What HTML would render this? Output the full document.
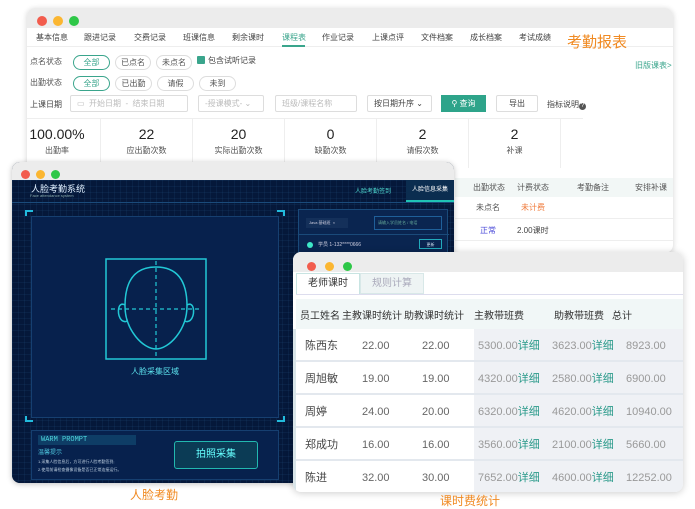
<!DOCTYPE html>
<html><head><meta charset="utf-8"><style>
*{margin:0;padding:0;box-sizing:border-box}
body{width:695px;height:508px;background:#fff;position:relative;overflow:hidden;font-family:"Liberation Sans","Noto Sans CJK SC",sans-serif;color:#333}
.a{position:absolute;white-space:nowrap}
.dots span{display:inline-block;width:10px;height:10px;border-radius:50%;margin-right:6px}
.r{background:#f25c4d}.y{background:#fbb631}.g{background:#2ec748}
.pill{position:absolute;height:15px;border:1px solid #ddd;border-radius:8px;font-size:8px;text-align:center;line-height:13px;color:#555}
.pill.on{border-color:#3aa58c;color:#3aa58c}
.inp{position:absolute;height:17px;border:1px solid #ddd;border-radius:2px;font-size:8px;color:#bbb;line-height:15px;padding-left:6px}
.stat{position:absolute;top:110px;width:74px;height:50px;border-right:1px solid #eee;text-align:center}
.stat b{display:block;font-weight:normal;font-size:14px;color:#222;margin-top:7px;line-height:18px}
.stat i{display:block;font-style:normal;font-size:8px;color:#555;margin-top:3px;line-height:10px}
table{border-collapse:collapse}
.row{position:relative;height:33px;border-bottom:2px solid #e3e8ee}
.row span{line-height:14px;top:10px;font-size:11px}
</style></head><body>

<!-- window 1 -->
<div class="a" style="left:27px;top:8px;width:646px;height:245px;background:#fff;border-radius:8px;box-shadow:0 1px 6px rgba(0,0,0,.18);overflow:hidden">
 <div style="height:20px;background:#ececec;padding:5px 0 0 10px" class="dots"><span class="r"></span><span class="y"></span><span class="g"></span></div>
 <div style="height:19px;border-bottom:1px solid #eee;font-size:8px;color:#444;position:relative">
  <span class="a" style="left:9px;top:4px">基本信息</span><span class="a" style="left:57px;top:4px">跟进记录</span><span class="a" style="left:107px;top:4px">交费记录</span><span class="a" style="left:156px;top:4px">班课信息</span><span class="a" style="left:205px;top:4px">剩余课时</span><span class="a" style="left:255px;top:4px;color:#3aa58c">课程表</span><span style="position:absolute;left:255px;top:17px;width:23px;height:2px;background:#3aa58c"></span><span class="a" style="left:295px;top:4px">作业记录</span><span class="a" style="left:345px;top:4px">上课点评</span><span class="a" style="left:394px;top:4px">文件档案</span><span class="a" style="left:443px;top:4px">成长档案</span><span class="a" style="left:492px;top:4px">考试成绩</span>
 </div>
 <span class="a" style="left:3px;top:48px;font-size:8px;color:#555">点名状态</span>
 <div class="pill on" style="left:46px;top:47px;width:37px">全部</div><div class="pill" style="left:88px;top:47px;width:36px">已点名</div><div class="pill" style="left:129px;top:47px;width:36px">未点名</div>
 <span class="a" style="left:170px;top:48px;width:8px;height:8px;background:#3aa58c;border-radius:1px"></span><span class="a" style="left:181px;top:47px;font-size:8px;color:#444">包含试听记录</span>
 <span class="a" style="left:608px;top:52px;font-size:8px;color:#3aa58c">旧版课表&gt;</span>
 <span class="a" style="left:3px;top:69px;font-size:8px;color:#555">出勤状态</span>
 <div class="pill on" style="left:46px;top:68px;width:37px">全部</div><div class="pill" style="left:88px;top:68px;width:37px">已出勤</div><div class="pill" style="left:130px;top:68px;width:37px">请假</div><div class="pill" style="left:172px;top:68px;width:37px">未到</div>
 <span class="a" style="left:3px;top:91px;font-size:8px;color:#444">上课日期</span>
 <div class="inp" style="left:43px;top:87px;width:118px">▭ &nbsp;开始日期 &nbsp;- &nbsp;结束日期</div>
 <div class="inp" style="left:171px;top:87px;width:66px">-授课模式- ⌄</div>
 <div class="inp" style="left:248px;top:87px;width:82px">班级/课程名称</div>
 <div class="inp" style="left:340px;top:87px;width:65px;color:#444">按日期升序 ⌄</div>
 <div class="a" style="left:414px;top:87px;width:45px;height:17px;background:#2ea48a;color:#fff;font-size:8px;text-align:center;line-height:17px">⚲ 查询</div>
 <div class="inp" style="left:469px;top:87px;width:42px;color:#444;text-align:center;padding:0">导出</div>
 <span class="a" style="left:520px;top:91px;font-size:8px;color:#444">指标说明<span style="display:inline-block;width:7px;height:7px;border-radius:50%;background:#555;color:#fff;font-size:6px;text-align:center;line-height:7px">?</span></span>
 <div class="a" style="left:-22px;top:110px;width:578px;height:1px;background:#eee"></div>
 <div class="stat" style="left:-14px;border-left:1px solid #eee;width:88px"><b>100.00%</b><i>出勤率</i></div>
 <div class="stat" style="left:74px;width:92px"><b>22</b><i>应出勤次数</i></div>
 <div class="stat" style="left:166px;width:92px"><b>20</b><i>实际出勤次数</i></div>
 <div class="stat" style="left:258px;width:92px"><b>0</b><i>缺勤次数</i></div>
 <div class="stat" style="left:350px;width:92px"><b>2</b><i>请假次数</i></div>
 <div class="stat" style="left:442px;width:92px"><b>2</b><i>补课</i></div>
 <div class="a" style="left:428px;top:170px;width:218px;height:19px;background:#f2f7f6;font-size:8px;color:#555"><span class="a" style="left:18px;top:4px">出勤状态</span><span class="a" style="left:62px;top:4px">计费状态</span><span class="a" style="left:122px;top:4px">考勤备注</span><span class="a" style="left:180px;top:4px">安排补课</span></div>
 <div class="a" style="left:428px;top:210px;width:218px;height:1px;background:#eee"></div>
 <div class="a" style="left:428px;top:232px;width:218px;height:1px;background:#eee"></div>
 <span class="a" style="left:449px;top:194px;font-size:8px;color:#555">未点名</span><span class="a" style="left:494px;top:194px;font-size:8px;color:#f07a3a">未计费</span>
 <span class="a" style="left:453px;top:217px;font-size:8px;color:#4a4ad8">正常</span><span class="a" style="left:490px;top:217px;font-size:8px;color:#444">2.00课时</span>
</div>
<span class="a" style="left:567px;top:31px;font-size:15px;color:#f08a22">考勤报表</span>

<!-- window 2 dark -->
<div class="a" style="left:12px;top:162px;width:442px;height:321px;border-radius:8px;overflow:hidden;box-shadow:0 1px 6px rgba(0,0,0,.25);background:#041a3c">
 <div style="height:18px;background:#ececec;padding:4px 0 0 9px" class="dots"><span class="r" style="width:9px;height:9px"></span><span class="y" style="width:9px;height:9px"></span><span class="g" style="width:9px;height:9px"></span></div>
 <div style="position:absolute;top:18px;left:0;right:0;bottom:0;background-color:#05183a;background-image:linear-gradient(rgba(40,90,140,.15) 1px,transparent 1px),linear-gradient(90deg,rgba(40,90,140,.15) 1px,transparent 1px);background-size:6px 6px">
  <span class="a" style="left:19px;top:2px;font-size:9px;color:#e0f0ff">人脸考勤系统</span>
  <span class="a" style="left:18px;top:13px;font-size:4px;color:#8aa">Face attendance system</span>
  <span class="a" style="left:343px;top:6px;font-size:6px;color:#4fd8d0">人脸考勤签到</span>
  <div class="a" style="left:394px;top:0;width:48px;height:22px;background:#0b2d50;border-bottom:2px solid #1fc3b5;font-size:6px;color:#fff;text-align:center;line-height:20px">人脸信息采集</div>
  <div class="a" style="left:0;top:22px;width:442px;height:1px;background:#1a4a7a"></div>
  <div class="a" style="left:13px;top:30px;width:8px;height:6px;border-left:2px solid #2bd;border-top:2px solid #2bd"></div>
  <div class="a" style="left:265px;top:30px;width:8px;height:6px;border-right:2px solid #2bd;border-top:2px solid #2bd"></div>
  <div class="a" style="left:13px;top:236px;width:8px;height:6px;border-left:2px solid #2bd;border-bottom:2px solid #2bd"></div>
  <div class="a" style="left:265px;top:236px;width:8px;height:6px;border-right:2px solid #2bd;border-bottom:2px solid #2bd"></div>
  <div class="a" style="left:19px;top:130px;width:2px;height:12px;background:#2bd"></div>
  <div class="a" style="left:265px;top:130px;width:2px;height:12px;background:#2bd"></div>
  <div class="a" style="left:19px;top:36px;width:248px;height:202px;background:#07214d;border:1px solid #163f70"></div>
  <svg class="a" style="left:93px;top:78px" width="102" height="102" viewBox="0 0 102 102" fill="none" stroke="#22c8d6" stroke-width="1.5">
   <rect x="1" y="1" width="100" height="100"/>
   <path d="M51 9 C28 9 20 25 20 48 C20 72 38 91 51 91 C64 91 82 72 82 48 C82 25 74 9 51 9Z"/>
   <path d="M20 47 C13 43 12 55 15 60 C17 64 21 64 22 63"/><path d="M82 47 C89 43 90 55 87 60 C85 64 81 64 80 63"/>
   <path d="M51 3 V99 M6 51 H96" stroke-dasharray="4 3" stroke-width="1.2"/>
  </svg>
  <span class="a" style="left:119px;top:186px;font-size:8px;color:#5ee6f0">人脸采集区域</span>
  <div class="a" style="left:19px;top:250px;width:248px;height:50px;background:#07214d;border:1px solid #163f70">
   <div class="a" style="left:6px;top:4px;width:98px;height:10px;background:#0e3d66;font-size:7px;color:#4fd8e0;padding-left:3px;line-height:10px;font-family:'Liberation Mono',monospace">WARM PROMPT</div>
   <span class="a" style="left:6px;top:16px;font-size:6px;color:#4fc8e0">温馨提示</span>
   <span class="a" style="left:6px;top:28px;font-size:4px;color:#bcd">1.采集人脸信息后，方可进行人脸考勤签到;</span>
   <span class="a" style="left:6px;top:36px;font-size:4px;color:#bcd">2.使用前请检查摄像设备是否已正常连接运行。</span>
   <div class="a" style="left:142px;top:10px;width:84px;height:28px;border:1px solid #22b8b0;border-radius:3px;background:#0b3b55;color:#6ff;font-size:10px;text-align:center;line-height:26px">拍照采集</div>
  </div>
  <div class="a" style="left:286px;top:29px;width:150px;height:70px;background:#0a2550;border:1px solid #1a4a7a">
   <div class="a" style="left:7px;top:8px;width:42px;height:10px;background:#14305a;font-size:4px;color:#ccd;line-height:10px;padding-left:3px">Java 基础班 &nbsp;×</div>
   <div class="a" style="left:75px;top:6px;width:68px;height:14px;border:1px solid #1f5f99;font-size:4px;color:#6a9;line-height:12px;padding-left:3px">请输入学员姓名 / 电话</div>
   <div class="a" style="left:0;top:24px;width:150px;height:1px;background:#1a4a7a"></div>
   <span class="a" style="left:8px;top:32px;width:6px;height:6px;border-radius:50%;background:#3ee8c8"></span>
   <span class="a" style="left:19px;top:31px;font-size:5px;color:#ccd">学员 1-132****0666</span>
   <div class="a" style="left:120px;top:29px;width:23px;height:10px;border:1px solid #2ab;font-size:4px;color:#cde;text-align:center;line-height:9px">更新</div>
  </div>
 </div>
</div>
<span class="a" style="left:130px;top:486px;font-size:12px;color:#f08a22">人脸考勤</span>

<!-- window 3 -->
<div class="a" style="left:293px;top:252px;width:390px;height:240px;background:#fff;border-radius:8px;box-shadow:0 1px 8px rgba(0,0,0,.2);overflow:hidden">
 <div style="height:20px;background:#ececec;padding:6px 0 0 14px" class="dots"><span class="r" style="width:9px;height:9px;margin-right:9px"></span><span class="y" style="width:9px;height:9px;margin-right:9px"></span><span class="g" style="width:9px;height:9px"></span></div>
 <div class="a" style="left:3px;top:21px;width:64px;height:21px;border:1px solid #c8e4e2;border-bottom:none;font-size:10px;color:#333;text-align:center;line-height:20px;background:#fff">老师课时</div>
 <div class="a" style="left:67px;top:21px;width:64px;height:21px;background:#eef4f4;border:1px solid #d8e8e8;font-size:10px;color:#aab;text-align:center;line-height:20px">规则计算</div>
 <div class="a" style="left:3px;top:42px;width:387px;height:1px;background:#dde"></div>
 <table class="a" style="left:3px;top:47px;width:387px;font-size:10px">
  <tr style="height:30px;background:#f1f7f7;color:#333"><td style="padding-left:4px;width:46px">员工姓名</td><td style="width:62px">主教课时统计</td><td style="width:62px">助教课时统计</td><td style="width:80px;padding-left:8px">主教带班费</td><td style="width:66px;padding-left:8px">助教带班费</td><td>总计</td></tr>
 </table>
 <div class="a" style="left:181px;top:77px;width:209px;height:163px;background:#eff1f5"></div>
 <div class="a" style="left:3px;top:77px;width:387px;color:#666">
  <div class="row"><span class="a" style="left:9px;color:#444">陈西东</span><span class="a" style="left:66px">22.00</span><span class="a" style="left:126px">22.00</span><span class="a" style="left:182px;color:#999">5300.00<span style="color:#2a9a8a">详细</span></span><span class="a" style="left:256px;color:#999">3623.00<span style="color:#2a9a8a">详细</span></span><span class="a" style="left:330px;color:#999">8923.00</span></div>
  <div class="row"><span class="a" style="left:9px;color:#444">周旭敏</span><span class="a" style="left:66px">19.00</span><span class="a" style="left:126px">19.00</span><span class="a" style="left:182px;color:#999">4320.00<span style="color:#2a9a8a">详细</span></span><span class="a" style="left:256px;color:#999">2580.00<span style="color:#2a9a8a">详细</span></span><span class="a" style="left:330px;color:#999">6900.00</span></div>
  <div class="row"><span class="a" style="left:9px;color:#444">周婷</span><span class="a" style="left:66px">24.00</span><span class="a" style="left:126px">20.00</span><span class="a" style="left:182px;color:#999">6320.00<span style="color:#2a9a8a">详细</span></span><span class="a" style="left:256px;color:#999">4620.00<span style="color:#2a9a8a">详细</span></span><span class="a" style="left:330px;color:#999">10940.00</span></div>
  <div class="row"><span class="a" style="left:9px;color:#444">郑成功</span><span class="a" style="left:66px">16.00</span><span class="a" style="left:126px">16.00</span><span class="a" style="left:182px;color:#999">3560.00<span style="color:#2a9a8a">详细</span></span><span class="a" style="left:256px;color:#999">2100.00<span style="color:#2a9a8a">详细</span></span><span class="a" style="left:330px;color:#999">5660.00</span></div>
  <div class="row" style="border:none"><span class="a" style="left:9px;color:#444">陈进</span><span class="a" style="left:66px">32.00</span><span class="a" style="left:126px">30.00</span><span class="a" style="left:182px;color:#999">7652.00<span style="color:#2a9a8a">详细</span></span><span class="a" style="left:256px;color:#999">4600.00<span style="color:#2a9a8a">详细</span></span><span class="a" style="left:330px;color:#999">12252.00</span></div>
 </div>
 <div class="a" style="left:0;top:77px;width:3px;height:163px;background:#d8e4e8"></div>
</div>
<span class="a" style="left:440px;top:492px;font-size:12px;color:#f08a22">课时费统计</span>
</body></html>
